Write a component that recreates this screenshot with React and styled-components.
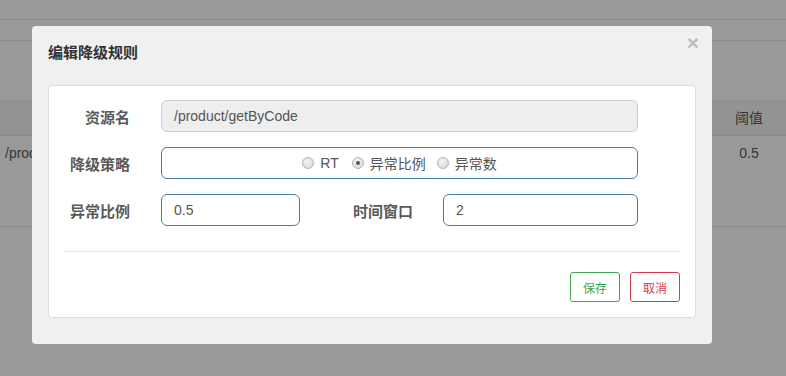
import styled, { createGlobalStyle } from "styled-components";

const GlobalStyle = createGlobalStyle`
html, body {
  margin: 0;
  padding: 0;
}
body {
  font-family: "Liberation Sans", "Noto Sans CJK SC", sans-serif;
  font-size: 14px;
  color: #333;
  overflow: hidden;
}
`;

// page behind the dialog
const Page = styled.div`
position: relative;
height: 376px;
background: #fff;
overflow: hidden;
`;

const TopBar = styled.div`
height: 19px;
border-bottom: 1px solid #e6e6e6;
`;

const SubBar = styled.div`
height: 20px;
border-bottom: 1px solid #e6e6e6;
`;

const Table = styled.div`
margin-top: 59px;
border-bottom: 1px solid #e6e6e6;
`;

const HeadRow = styled.div`
display: flex;
height: 35px;
align-items: center;
background: #f6f6f6;
border-bottom: 1px solid #e6e6e6;
`;

const BodyRow = styled.div`
display: flex;
height: 90px;
padding-top: 7px;
box-sizing: border-box;
`;

const Cell = styled.div`
flex: none;
font-size: 14px;
line-height: 20px;
color: #5a5a5a;
white-space: nowrap;
overflow: hidden;
`;

const FirstCell = styled(Cell)`
width: 27px;
padding-left: 5px;
margin-right: auto;
`;

const LastCell = styled(Cell)`
width: 74px;
text-align: center;
`;

const Backdrop = styled.div`
position: absolute;
inset: 0;
background: rgba(0, 0, 0, 0.4);
`;

// dialog
const Modal = styled.div`
position: absolute;
left: 32px;
top: 26px;
width: 680px;
box-sizing: border-box;
padding: 17px 16px 26px;
background: #f0f0f0;
border-radius: 4px;
`;

const Title = styled.h4`
margin: 0 0 22px;
font-size: 15px;
line-height: 20px;
font-weight: bold;
color: #333;
`;

const Close = styled.span`
position: absolute;
top: 6px;
right: 13px;
font-family: "Liberation Sans", sans-serif;
font-size: 21px;
font-weight: bold;
line-height: 1;
color: #bdbdbd;
`;

const Panel = styled.div`
background: #fff;
border: 1px solid #dcdcdc;
border-radius: 4px;
padding: 14px 15px 15px;
`;

const Row = styled.div`
display: flex;
align-items: center;
margin-bottom: ${(p) => (p.$last ? "0" : "15px")};
`;

const Label = styled.label`
width: ${(p) => p.$w || 66}px;
flex: none;
margin-right: ${(p) => p.$gap || 31}px;
text-align: right;
font-size: 15px;
font-weight: bold;
color: #5a5a5a;
`;

const Field = styled.div`
width: ${(p) => p.$w}px;
height: 32px;
box-sizing: border-box;
display: flex;
align-items: center;
justify-content: ${(p) => (p.$center ? "center" : "flex-start")};
padding-left: ${(p) => (p.$center ? "0" : "12px")};
border: 1px solid ${(p) => (p.$disabled ? "#cccccc" : "#4a7ca6")};
background: ${(p) => (p.$disabled ? "#eeeeee" : "#fff")};
border-radius: 6px;
font-size: 14px;
color: #555;
`;

const RadioItem = styled.span`
display: inline-flex;
align-items: center;
margin-right: ${(p) => p.$mr || 0}px;
font-size: 14px;
color: #555;
`;

const Dot = styled.span`
position: relative;
width: 12px;
height: 12px;
margin-right: 6px;
border-radius: 50%;
box-sizing: border-box;
border: 1px solid #b4b4b4;
background: radial-gradient(circle at 40% 35%, #f4f4f4, #d4d4d4);

&::after {
  content: "";
  display: ${(p) => (p.$on ? "block" : "none")};
  position: absolute;
  left: 3px;
  top: 3px;
  width: 4px;
  height: 4px;
  border-radius: 50%;
  background: #555;
}
`;

const Divider = styled.div`
height: 1px;
background: #e6e6e6;
margin: 25px -1px 20px;
`;

const Actions = styled.div`
display: flex;
justify-content: flex-end;
gap: 10px;
`;

const Button = styled.button`
width: 50px;
height: 30px;
padding: 0;
background: #fff;
border: 1px solid ${(p) => p.$color};
color: ${(p) => p.$color};
border-radius: 3px;
font-family: "Liberation Sans", "Noto Sans CJK SC", sans-serif;
font-size: 12px;
cursor: pointer;
`;

const App = () => {
  return (
    <>
      <GlobalStyle />
      <Page>
        <TopBar />
        <SubBar />
        <Table>
          <HeadRow>
            <FirstCell />
            <LastCell>阈值</LastCell>
          </HeadRow>
          <BodyRow>
            <FirstCell>/product/getByCode</FirstCell>
            <LastCell>0.5</LastCell>
          </BodyRow>
        </Table>
        <Backdrop />
        <Modal>
          <Title>编辑降级规则</Title>
          <Close>×</Close>
          <Panel>
            <Row>
              <Label>资源名</Label>
              <Field $w={477} $disabled>/product/getByCode</Field>
            </Row>
            <Row>
              <Label>降级策略</Label>
              <Field $w={477} $center>
                <RadioItem $mr={13}><Dot />RT</RadioItem>
                <RadioItem $mr={11}><Dot $on />异常比例</RadioItem>
                <RadioItem><Dot />异常数</RadioItem>
              </Field>
            </Row>
            <Row $last>
              <Label>异常比例</Label>
              <Field $w={139}>0.5</Field>
              <Label $w={113} $gap={30}>时间窗口</Label>
              <Field $w={195}>2</Field>
            </Row>
            <Divider />
            <Actions>
              <Button $color="#3fa34d">保存</Button>
              <Button $color="#d2404f">取消</Button>
            </Actions>
          </Panel>
        </Modal>
      </Page>
    </>
  );
};

export default App;
